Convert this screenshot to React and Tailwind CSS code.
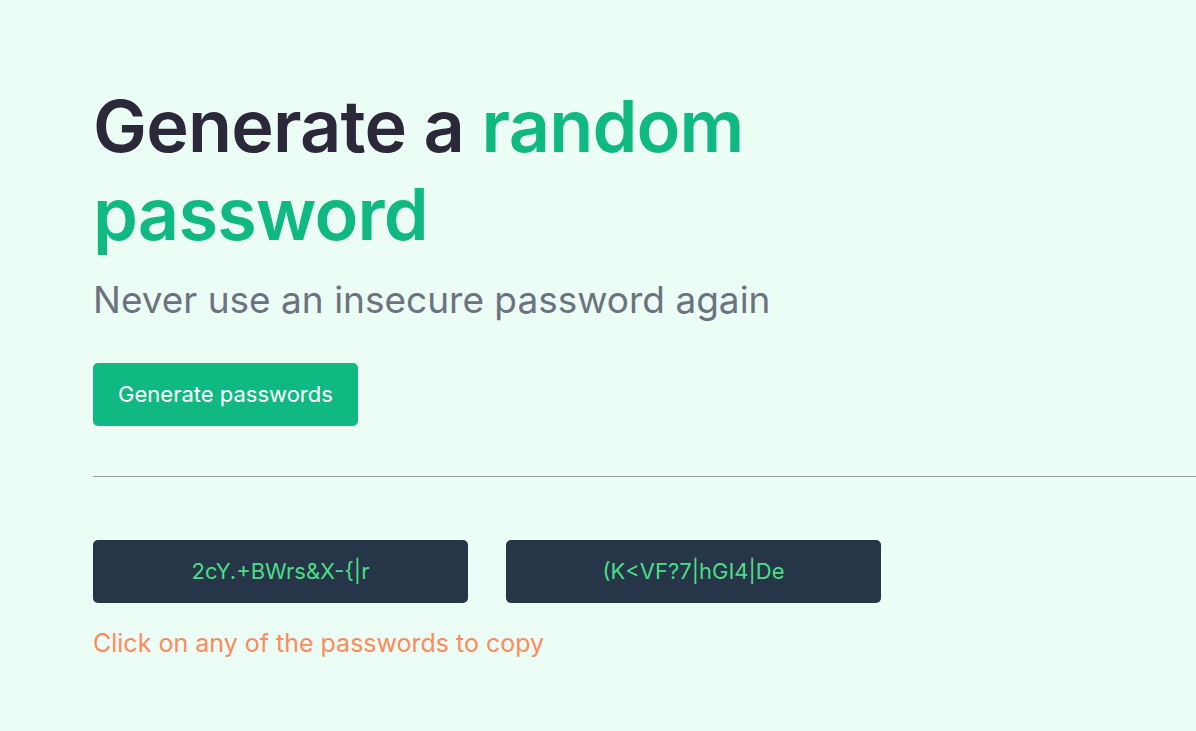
export default function App() {
  return (
    <div className="min-h-[731px] bg-[#ecfdf5] pl-[93px] pt-[82px] font-['Inter',sans-serif]">
      <h1 className="max-w-[700px] text-[72px] font-semibold leading-[88px] tracking-[-0.8px] text-[#2b283a]">
        Generate a <span className="text-[#10b981]">random password</span>
      </h1>
      <p className="mt-[18px] text-[37px] leading-[48px] text-[#6b7280]">Never use an insecure password again</p>
      <button className="mt-[39px] flex h-[63px] w-[265px] items-center justify-center rounded-[5px] bg-[#10b981] text-[22px] text-white">
        Generate passwords
      </button>
      <hr className="mt-[50px] border-t border-[#9e9e9e]" />
      <div className="mt-[63px] flex gap-[38px]">
        {['2cY.+BWrs&X-{|r', '(K<VF?7|hGI4|De'].map((p) => (
          <div key={p} className="flex h-[63px] w-[375px] items-center justify-center rounded-[5px] bg-[#273549] text-[22px] text-[#4adf86]">
            {p}
          </div>
        ))}
      </div>
      <p className="mt-[25px] text-[25px] leading-[30px] text-[#ff8a5c]">Click on any of the passwords to copy</p>
    </div>
  )
}
